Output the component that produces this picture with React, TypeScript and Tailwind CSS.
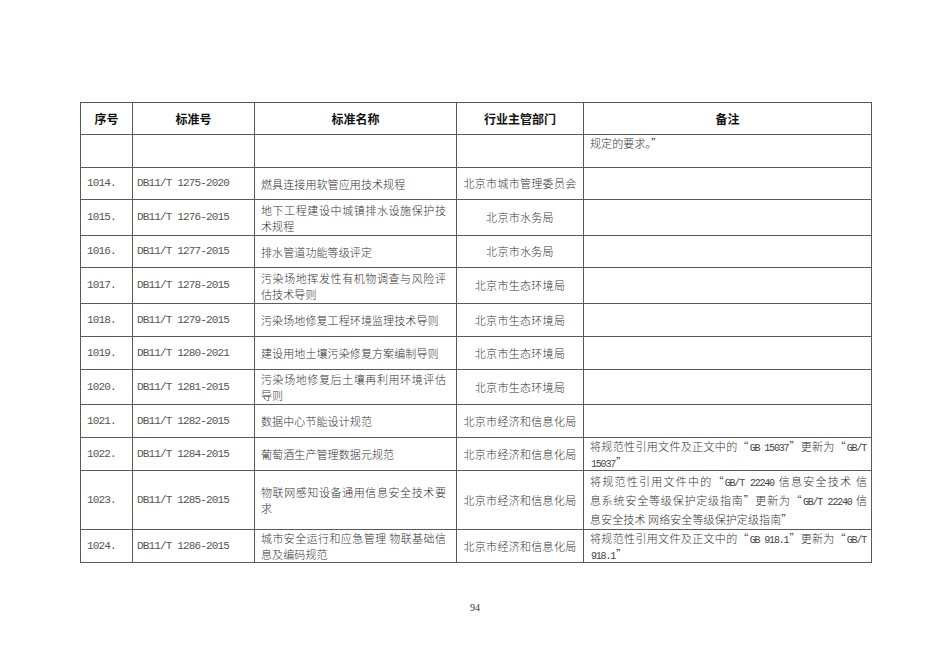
import React from 'react';

type Row = {
  no: string;
  code: string;
  name: string[];
  dept: string;
  note: string[];
  h: string;
  noteLeading?: string;
  noteTop?: boolean;
};

const cjk = `'Noto Sans CJK SC', 'Noto Sans', sans-serif`;

const rows: Row[] = [
  { no: '', code: '', name: [], dept: '', note: ['规定的要求。”'], h: 'h-[33px]', noteTop: true },
  { no: '1014.', code: 'DB11/T 1275-2020', name: ['燃具连接用软管应用技术规程'], dept: '北京市城市管理委员会', note: [], h: 'h-[32px]' },
  { no: '1015.', code: 'DB11/T 1276-2015', name: ['地下工程建设中城镇排水设施保护技', '术规程'], dept: '北京市水务局', note: [], h: 'h-[36px]' },
  { no: '1016.', code: 'DB11/T 1277-2015', name: ['排水管道功能等级评定'], dept: '北京市水务局', note: [], h: 'h-[32px]' },
  { no: '1017.', code: 'DB11/T 1278-2015', name: ['污染场地挥发性有机物调查与风险评', '估技术导则'], dept: '北京市生态环境局', note: [], h: 'h-[36px]' },
  { no: '1018.', code: 'DB11/T 1279-2015', name: ['污染场地修复工程环境监理技术导则'], dept: '北京市生态环境局', note: [], h: 'h-[33px]' },
  { no: '1019.', code: 'DB11/T 1280-2021', name: ['建设用地土壤污染修复方案编制导则'], dept: '北京市生态环境局', note: [], h: 'h-[33px]' },
  { no: '1020.', code: 'DB11/T 1281-2015', name: ['污染场地修复后土壤再利用环境评估', '导则'], dept: '北京市生态环境局', note: [], h: 'h-[35px]' },
  { no: '1021.', code: 'DB11/T 1282-2015', name: ['数据中心节能设计规范'], dept: '北京市经济和信息化局', note: [], h: 'h-[33px]' },
  {
    no: '1022.', code: 'DB11/T 1284-2015', name: ['葡萄酒生产管理数据元规范'], dept: '北京市经济和信息化局',
    note: ['将规范性引用文件及正文中的“GB 15037”更新为“GB/T', '15037”'], h: 'h-[33px]',
  },
  {
    no: '1023.', code: 'DB11/T 1285-2015', name: ['物联网感知设备通用信息安全技术要', '求'], dept: '北京市经济和信息化局',
    note: ['将规范性引用文件中的“GB/T 22240 信息安全技术 信', '息系统安全等级保护定级指南”更新为“GB/T 22240 信', '息安全技术 网络安全等级保护定级指南”'],
    h: 'h-[59px]', noteLeading: 'leading-[19px]',
  },
  {
    no: '1024.', code: 'DB11/T 1286-2015', name: ['城市安全运行和应急管理 物联基础信', '息及编码规范'], dept: '北京市经济和信息化局',
    note: ['将规范性引用文件及正文中的“GB 918.1”更新为“GB/T', '918.1”'], h: 'h-[33px]',
  },
];

// ascii runs get the narrow typewriter face, the rest stays in the CJK face
const Mixed: React.FC<{ text: string }> = ({ text }) => (
  <>
    {text.split(/([\x21-\x7e](?:[\x20-\x7e]*[\x21-\x7e])?)/).map((part, i) =>
      /^[\x21-\x7e]/.test(part) ? (
        <span key={i} className="font-['Liberation_Mono'] text-[10px] leading-[8px] tracking-[-1.2px] px-[1px] text-[#444]">{part}</span>
      ) : (
        <span key={i}>{part}</span>
      )
    )}
  </>
);

const Lines: React.FC<{ lines: string[] }> = ({ lines }) => (
  <>
    {lines.map((l, i) => (
      <div
        key={i}
        className={i < lines.length - 1 ? 'whitespace-nowrap text-justify [text-align-last:justify]' : 'whitespace-nowrap'}
      >
        <Mixed text={l} />
      </div>
    ))}
  </>
);

const cell = 'border border-[#5a5a5a] p-0';
const mono = "font-['Liberation_Mono'] text-[11px] tracking-[-0.85px] font-normal text-[#555]";

export default function App() {
  return (
    <div className="w-[950px] h-[672px] bg-white text-[#333] overflow-hidden" style={{ fontFamily: cjk }}>
      <table className="ml-[80px] mt-[102px] w-[791px] table-fixed border-collapse">
        <colgroup>
          <col className="w-[52px]" />
          <col className="w-[122px]" />
          <col className="w-[202px]" />
          <col className="w-[127px]" />
          <col className="w-[288px]" />
        </colgroup>
        <thead>
          <tr className="h-[32px] text-[12px] font-bold text-[#111]">
            <th className={cell}>序号</th>
            <th className={cell}>标准号</th>
            <th className={cell}>标准名称</th>
            <th className={cell}>行业主管部门</th>
            <th className={cell}>备注</th>
          </tr>
        </thead>
        <tbody className="text-[11px] font-light">
          {rows.map((r, idx) => (
            <tr key={idx} className={r.h}>
              <td className={`${cell} pl-[6px] align-middle ${mono}`}>{r.no}</td>
              <td className={`${cell} pl-[4px] align-middle whitespace-pre ${mono}`}>{r.code}</td>
              <td className={`${cell} align-middle`}>
                <div className="w-[185px] pl-[6px] leading-[16px] tracking-[0.1px] box-content">
                  <Lines lines={r.name} />
                </div>
              </td>
              <td className={`${cell} text-center align-middle tracking-[0.3px]`}>{r.dept}</td>
              <td className={`${cell} ${r.noteTop ? 'align-top' : 'align-middle'}`}>
                <div className={`w-[277px] pl-[6px] box-content tracking-[0.1px] ${r.noteLeading ?? 'leading-[16px]'}`}>
                  <Lines lines={r.note} />
                </div>
              </td>
            </tr>
          ))}
        </tbody>
      </table>
      <div className="mt-[37px] text-center text-[10px] font-['Liberation_Serif'] text-[#333]">94</div>
    </div>
  );
}
